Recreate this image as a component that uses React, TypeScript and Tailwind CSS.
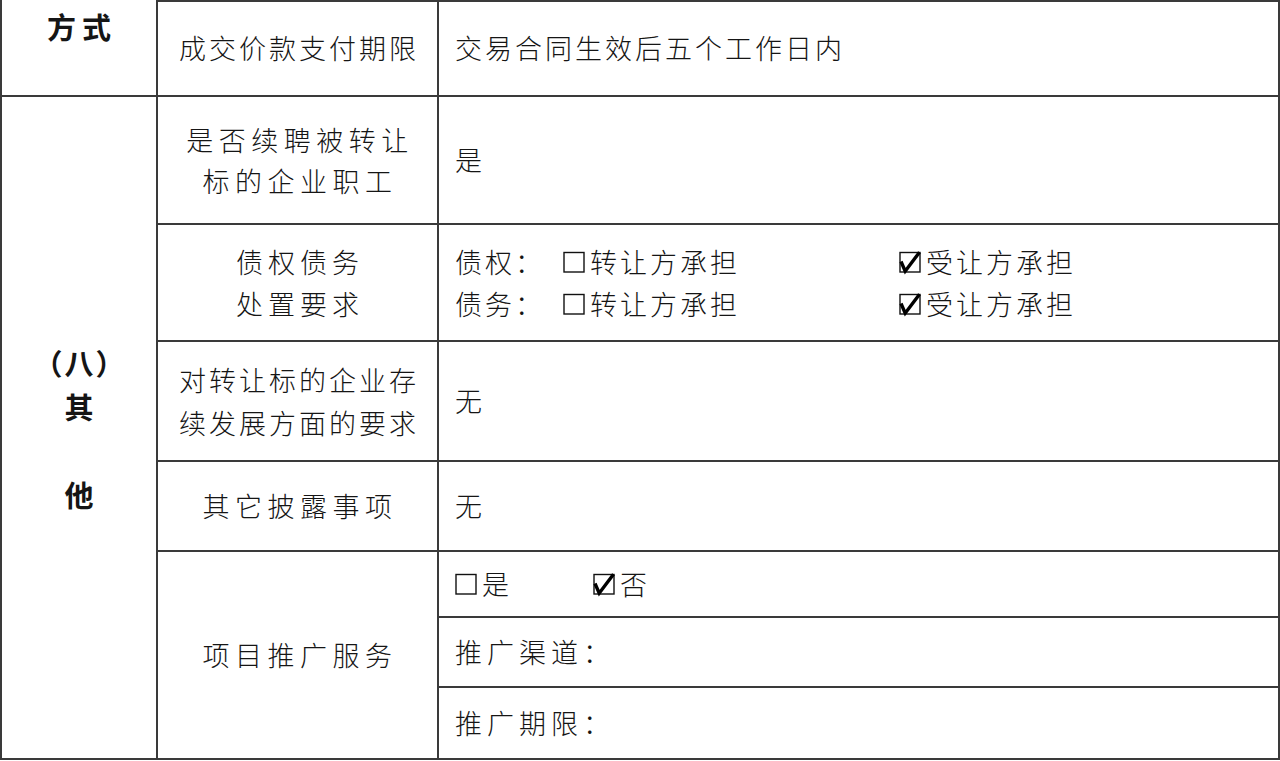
import React from "react";

const Box = ({ checked }: { checked?: boolean }) => (
  <svg
    width="22"
    height="22"
    viewBox="0 0 22 22"
    className="inline-block shrink-0"
    style={{ overflow: "visible" }}
  >
    <rect x="1" y="1.5" width="20" height="19.5" fill="none" stroke="#111" strokeWidth="1.4" />
    {checked && (
      <path
        d="M2 10.5 L6.2 20.2 L20.5 1.2"
        fill="none"
        stroke="#000"
        strokeWidth="3.4"
        strokeLinecap="butt"
        strokeLinejoin="miter"
      />
    )}
  </svg>
);

const Opt = ({ checked, label, w }: { checked?: boolean; label: string; w?: string }) => (
  <span className={`inline-flex items-center ${w ?? ""}`}>
    <Box checked={checked} />
    <span className="ml-[5px] tracking-[3px]">{label}</span>
  </span>
);

export default function App() {
  const cell = "border-r-2 border-b-2 border-[#3a3a3a]";
  return (
    <div
      className="w-[1280px] h-[761px] bg-white text-[#151515] overflow-hidden"
      style={{ fontFamily: '"Noto Sans CJK SC", "Noto Sans", sans-serif' }}
    >
      <div className="border-l-2 border-[#3a3a3a] grid grid-cols-[156px_281px_1fr] grid-rows-[97px_128px_117px_120px_90px_66px_70px_72px]">
        {/* Row 1 */}
        <div className={`${cell} flex justify-center pt-[6px] pl-[6px]`}>
          <span className="font-bold text-[29px] tracking-[6px] leading-[40px]">方式</span>
        </div>
        <div className={`${cell} border-t-2 flex items-center justify-center pl-[3px] font-light text-[27px] tracking-[3px]`}>
          成交价款支付期限
        </div>
        <div className={`${cell} border-t-2 flex items-center pl-[16px] font-light text-[27px] tracking-[3px]`}>
          交易合同生效后五个工作日内
        </div>

        {/* Left merged column */}
        <div className={`${cell} row-span-7 flex flex-col items-center justify-center font-bold text-[29px] leading-[44px]`}>
          <span className="tracking-[2px] pl-[2px]">（八）</span>
          <span>其</span>
          <span>&nbsp;</span>
          <span>他</span>
        </div>

        {/* Row 2 */}
        <div className={`${cell} flex flex-col items-center justify-center pl-[5px] font-light text-[27px] tracking-[5.5px] leading-[41px] text-center`}>
          <span>是否续聘被转让</span>
          <span>标的企业职工</span>
        </div>
        <div className={`${cell} flex items-center pl-[16px] font-light text-[27px] tracking-[3px]`}>是</div>

        {/* Row 3 */}
        <div className={`${cell} flex flex-col items-center justify-center pl-[5px] font-light text-[27px] tracking-[5px] leading-[42px] text-center`}>
          <span>债权债务</span>
          <span>处置要求</span>
        </div>
        <div className={`${cell} flex flex-col justify-center pl-[16px] font-light text-[27px] leading-[42px]`}>
          <div className="flex items-center">
            <span className="w-[108px] tracking-[3px]">债权：</span>
            <Opt label="转让方承担" w="w-[336px]" />
            <Opt checked label="受让方承担" />
          </div>
          <div className="flex items-center">
            <span className="w-[108px] tracking-[3px]">债务：</span>
            <Opt label="转让方承担" w="w-[336px]" />
            <Opt checked label="受让方承担" />
          </div>
        </div>

        {/* Row 4 */}
        <div className={`${cell} flex flex-col items-center justify-center pl-[3px] font-light text-[27px] tracking-[3px] leading-[43px] text-center`}>
          <span>对转让标的企业存</span>
          <span>续发展方面的要求</span>
        </div>
        <div className={`${cell} flex items-center pl-[16px] font-light text-[27px] tracking-[3px]`}>无</div>

        {/* Row 5 */}
        <div className={`${cell} flex items-center justify-center pl-[5px] font-light text-[27px] tracking-[5.5px]`}>
          其它披露事项
        </div>
        <div className={`${cell} flex items-center pl-[16px] font-light text-[27px] tracking-[3px]`}>无</div>

        {/* Rows 6-8 */}
        <div className={`${cell} row-span-3 flex items-center justify-center pl-[5px] font-light text-[27px] tracking-[5.5px]`}>
          项目推广服务
        </div>
        <div className={`${cell} flex items-center pl-[16px] font-light text-[27px]`}>
          <Opt label="是" w="w-[138px]" />
          <Opt checked label="否" />
        </div>
        <div className={`${cell} flex items-center pl-[16px] font-light text-[27px] tracking-[5px]`}>推广渠道：</div>
        <div className={`${cell} flex items-center pl-[16px] font-light text-[27px] tracking-[5px]`}>推广期限：</div>
      </div>
    </div>
  );
}
